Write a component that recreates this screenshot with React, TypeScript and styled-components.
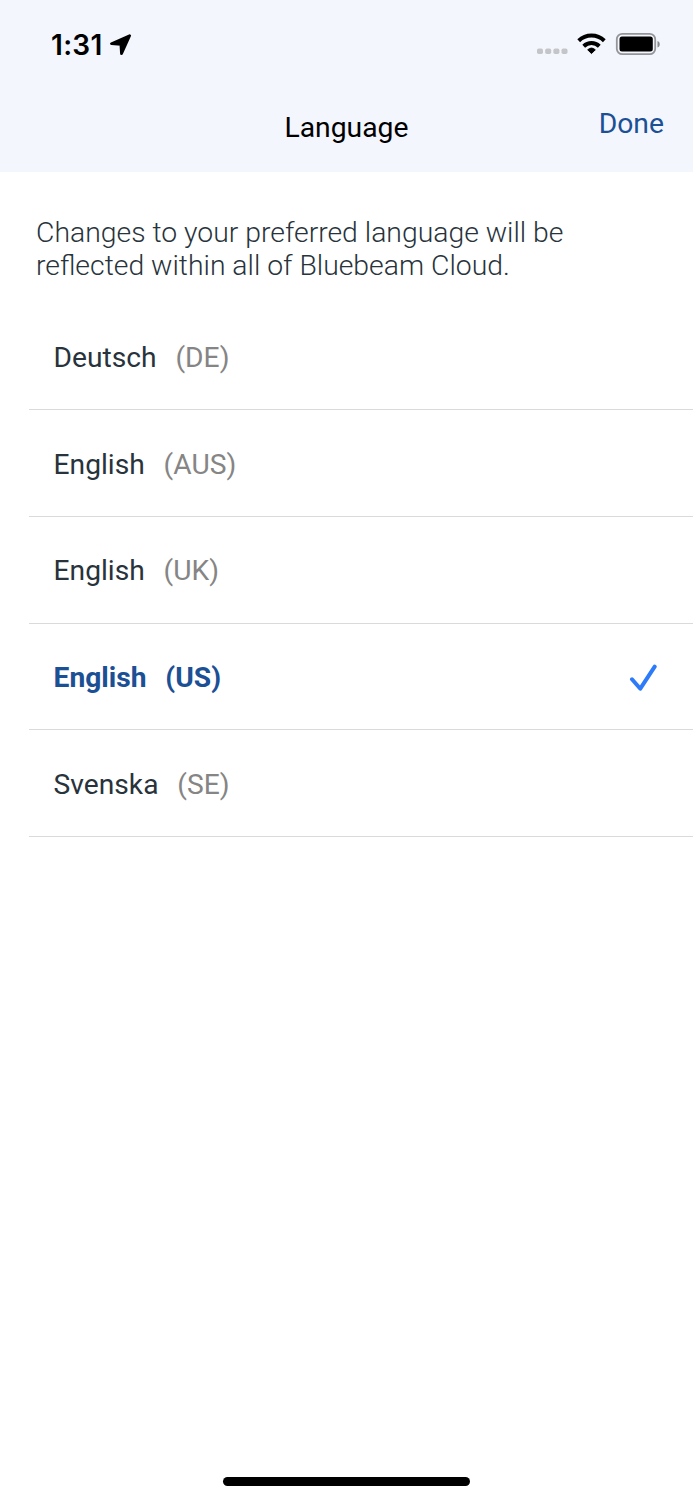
import React from "react";
import styled, { createGlobalStyle } from "styled-components";

const GlobalStyle = createGlobalStyle`
  * { box-sizing: border-box; }
  body { margin: 0; background: #fff; font-family: Roboto, sans-serif; }
`;
const Screen = styled.div`
  display: flex;
  flex-direction: column;
  width: 693px;
  height: 1500px;
  overflow: hidden;
`;
const Header = styled.header`
  height: 172px;
  background: #f3f6fd;
`;
const StatusBar = styled.div`
  height: 88px;
  display: flex;
  justify-content: space-between;
  padding: 28px 32px 0 51px;
`;
const Time = styled.div`
  display: flex;
  align-items: flex-start;
  gap: 7px;
  font: 600 28px/34px Inter, sans-serif;
  letter-spacing: 0.3px;
  color: #000;
`;
const LocationArrow = styled.svg`
  margin-top: 6px;
`;
const NavBar = styled.div`
  display: grid;
  grid-template-columns: 1fr auto 1fr;
  padding: 0 29px;
  font-size: 28.3px;
  line-height: 34px;
`;
const Title = styled.h1`
  grid-column: 2;
  margin: 23px 0 0;
  font: inherit;
  color: #000;
`;
const Done = styled.button`
  justify-self: end;
  align-self: start;
  margin: 19px 0 0;
  padding: 0;
  border: 0;
  background: none;
  font: inherit;
  color: #1c5095;
`;
const Intro = styled.p`
  margin: 44px 36px 21.5px;
  font-weight: 300;
  font-size: 28.35px;
  line-height: 33px;
  color: #28333b;
`;
const List = styled.ul`
  list-style: none;
  margin: 0 0 0 29px;
  padding: 0;
`;
const Row = styled.li<{ $selected?: boolean }>`
  display: flex;
  align-items: center;
  height: 106.7px;
  padding: 3px 36px 0 24.6px;
  border-bottom: 1px solid #dadada;
  font-size: 28.2px;
  line-height: 34px;
  font-weight: ${(p) => (p.$selected ? 700 : 400)};
  color: ${(p) => (p.$selected ? "#1c5095" : "#28333b")};
`;
const Region = styled.span<{ $selected?: boolean }>`
  margin-left: 18.8px;
  color: ${(p) => (p.$selected ? "inherit" : "#858585")};
`;
const Check = styled.svg`
  margin-left: auto;
`;
const HomeIndicator = styled.div`
  width: 247px;
  height: 9px;
  border-radius: 5px;
  margin: auto auto 14.5px 223px;
  background: #000;
`;

const languages = [
  { name: "Deutsch", region: "DE" },
  { name: "English", region: "AUS" },
  { name: "English", region: "UK" },
  { name: "English", region: "US", selected: true },
  { name: "Svenska", region: "SE" },
];

export default function App() {
  return (
    <Screen>
      <GlobalStyle />
      <Header>
        <StatusBar>
          <Time>
            1:31
            <LocationArrow width="22" height="22" viewBox="0 0 22 22">
              <path
                d="M19.600 1.700 1.500 9.700 10.900 10.400 11.500 19.600Z"
                stroke="#000"
                strokeWidth="2.800"
                strokeLinejoin="round"
              />
            </LocationArrow>
          </Time>
          <svg width="125" height="34" viewBox="536 28 125 34">
            <g fill="#c3c5c9">
              <rect x="537" y="48.500" width="6" height="5.500" rx="1.800" />
              <rect x="545.200" y="48.500" width="6" height="5.500" rx="1.800" />
              <rect x="553.400" y="48.500" width="6" height="5.500" rx="1.800" />
              <rect x="561.500" y="48.500" width="6" height="5.500" rx="1.800" />
            </g>
            <g fill="none" stroke="#000" strokeWidth="4">
              <path d="M578.700 40.700a18.500 18.500 0 0 1 25.600 0" />
              <path d="M583.700 46.200a11.300 11.300 0 0 1 15.600 0" />
            </g>
            <path d="m591.500 53.600-3.800-3.800a5.700 5.700 0 0 1 7.600 0Z" strokeLinejoin="round" stroke="#000" strokeWidth="1" />
            <rect x="616.800" y="33.800" width="38.400" height="20.400" rx="5.500" fill="none" stroke="#949599" strokeWidth="1.800" />
            <rect x="619.500" y="36.500" width="33.300" height="15" rx="2.500" />
            <path d="M657.500 41c3 1 3 5.500 0 6.500Z" fill="#88898c" />
          </svg>
        </StatusBar>
        <NavBar>
          <Title>Language</Title>
          <Done>Done</Done>
        </NavBar>
      </Header>
      <Intro>
        Changes to your preferred language will be
        <br />
        reflected within all of Bluebeam Cloud.
      </Intro>
      <List>
        {languages.map((l) => (
          <Row key={l.region} $selected={l.selected}>
            <span>{l.name}</span>
            <Region $selected={l.selected}>({l.region})</Region>
            {l.selected && (
              <Check width="28" height="28" viewBox="0 0 28 28" fill="none" stroke="#2e7bfa" strokeWidth="4" strokeLinecap="round" strokeLinejoin="round">
                <path d="M3 15.300 11.300 24.700 25.700 2.700" />
              </Check>
            )}
          </Row>
        ))}
      </List>
      <HomeIndicator />
    </Screen>
  );
}
